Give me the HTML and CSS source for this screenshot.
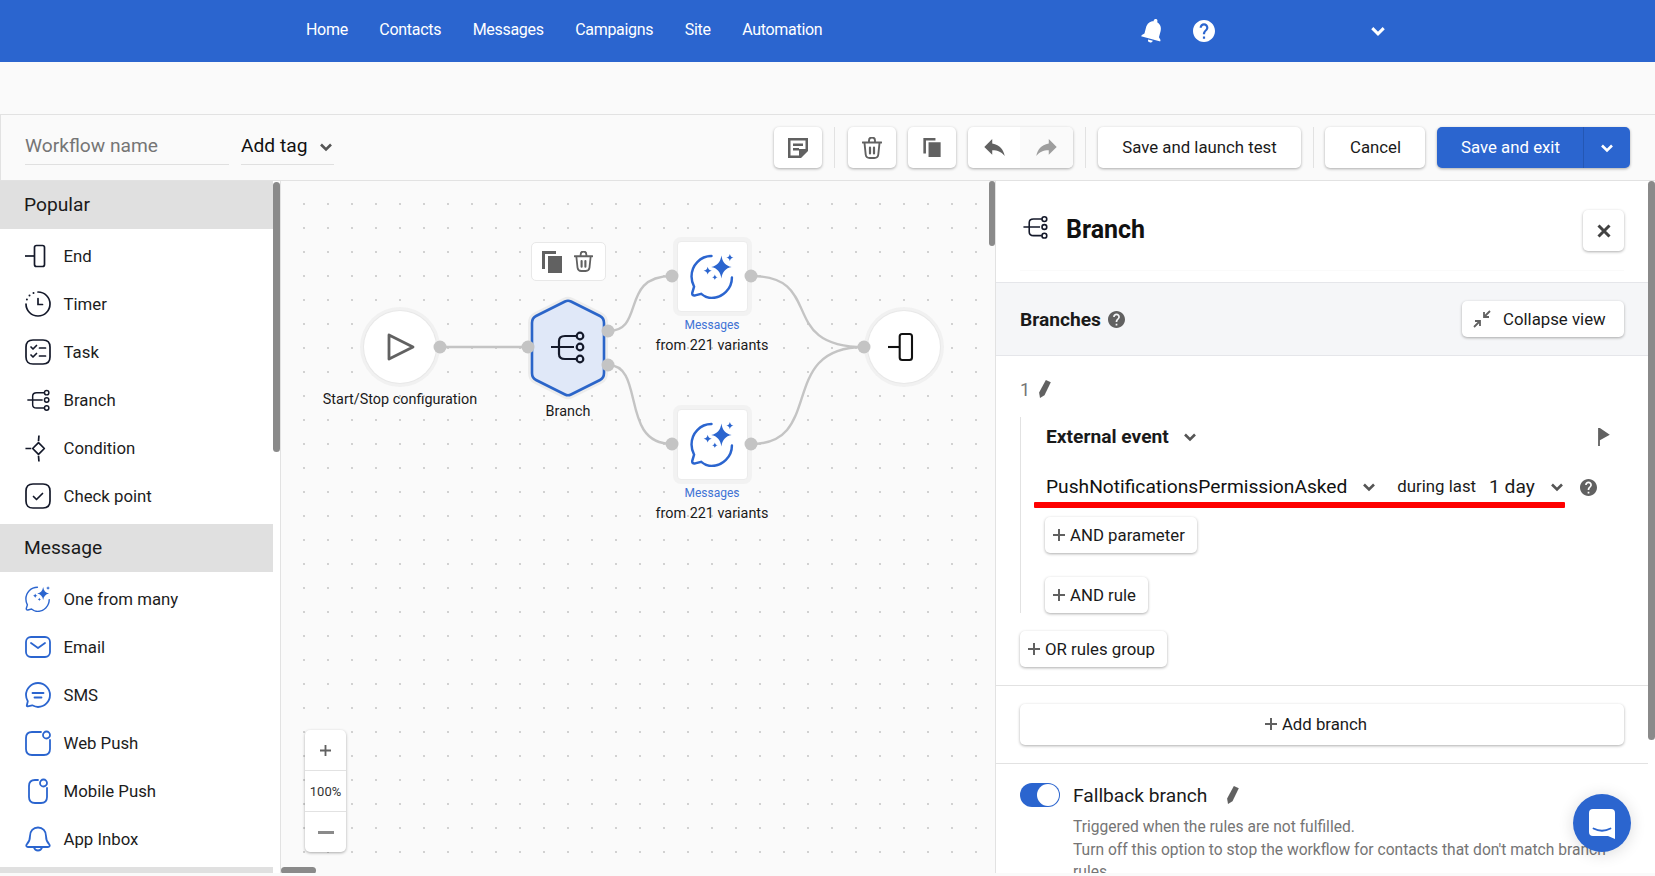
FILE: index.html
```html
<!DOCTYPE html>
<html lang="en">
<head>
<meta charset="utf-8">
<title>Workflow</title>
<link rel="stylesheet" href="styles.css">
</head>
<body>
<svg class="defs" xmlns="http://www.w3.org/2000/svg">
  <symbol id="i-chev" viewBox="0 0 14 10"><path d="M2 2.500l5 5 5-5" fill="none" stroke="currentColor" stroke-width="2.600"/></symbol>
  <symbol id="i-help" viewBox="2 2 20 20"><path fill="currentColor" d="M12 2C6.480 2 2 6.480 2 12s4.480 10 10 10 10-4.480 10-10S17.520 2 12 2zm1 17h-2v-2h2v2zm2.070-7.750l-.9.920C13.450 12.900 13 13.500 13 15h-2v-.5c0-1.100.45-2.100 1.170-2.830l1.240-1.260c.37-.36.59-.86.59-1.410 0-1.100-.9-2-2-2s-2 .9-2 2H8c0-2.210 1.790-4 4-4s4 1.790 4 4c0 .88-.36 1.680-.93 2.250z"/></symbol>
  <symbol id="i-note" viewBox="0 0 20 20"><path fill="currentColor" d="M0 0h20v13l-7 7H0zM2.500 2.500v15H11v-6.500h6.500v-8.500zM5 5.500h10V8H5zM5 10h6v2.500H5z"/></symbol>
  <symbol id="i-trash" viewBox="0 0 20 22"><g fill="none" stroke="currentColor" stroke-width="1.900" stroke-linecap="round"><path d="M0.500 5.500h19M7 5V3.500a3 3 0 0 1 6 0V5M2.500 6l1.200 11.500a4 4 0 0 0 4 3.500h4.600a4 4 0 0 0 4-3.500L17.500 6"/><path d="M8 10.500v6M12 10.500v6" stroke-width="2.200"/></g></symbol>
  <symbol id="i-copy" viewBox="0 0 20 22"><path fill="currentColor" d="M0 0h14v3H3v15H0zM6 5h14v17H6z"/></symbol>
  <symbol id="i-undo" viewBox="3 5 18 15"><path fill="currentColor" d="M10 9V5l-7 7 7 7v-4.100c5 0 8.500 1.600 11 5.100-1-5-4-10-11-11z"/></symbol>
  <symbol id="i-redo" viewBox="3 5 18 15"><path fill="currentColor" d="M14 9V5l7 7-7 7v-4.100c-5 0-8.500 1.600-11 5.100 1-5 4-10 11-11z"/></symbol>
  <symbol id="i-end" viewBox="1.500 0 26 26"><path d="M0.500 13H11" fill="none" stroke="currentColor" stroke-width="1.700"/><rect x="11" y="2.500" width="10" height="21" rx="2" fill="none" stroke="currentColor" stroke-width="1.700"/></symbol>
  <symbol id="i-timer" viewBox="0 0 26 26"><g fill="none" stroke="currentColor" stroke-width="1.700" stroke-linecap="round"><path d="M13 1a12 12 0 1 1-12 12M13 7.500v6h4.500"/><path d="M8.500 1.900v.01M4.500 4.500v.01M1.900 8.500v.01" stroke-width="2"/></g></symbol>
  <symbol id="i-task" viewBox="0 0 26 26"><g fill="none" stroke="currentColor" stroke-width="1.700" stroke-linecap="round" stroke-linejoin="round"><path d="M8 1h10q7 0 7 7v10q0 7-7 7H8q-7 0-7-7V8q0-7 7-7z"/><path d="M6 8l2 2 3.500-3.500M6 16l2 2 3.500-3.500M14.500 9h6M14.500 17h6"/></g></symbol>
  <symbol id="i-branch" viewBox="0 0 36 36"><g fill="none" stroke="currentColor" stroke-width="2.200"><path d="M2 18h23M27.500 7H16q-6 0-6 5v13q0 5 6 5h11.500"/><circle cx="31" cy="7" r="3.300"/><circle cx="31" cy="18" r="3.300"/><circle cx="31" cy="30" r="3.300"/></g></symbol>
  <symbol id="i-cond" viewBox="0 0 30 30"><g fill="none" stroke="currentColor" stroke-width="1.900" stroke-linejoin="round"><path d="M15 8.500l6.500 6.500-6.500 6.500L8.500 15z"/><path d="M0.500 15H7M15.500 0.500L15 7M15 23l.5 6.500"/></g></symbol>
  <symbol id="i-check" viewBox="0 0 26 26"><g fill="none" stroke="currentColor" stroke-width="1.700" stroke-linecap="round" stroke-linejoin="round"><path d="M8 1h10q7 0 7 7v10q0 7-7 7H8q-7 0-7-7V8q0-7 7-7z"/><path d="M8.500 13.500l3 3 6-6"/></g></symbol>
  <symbol id="i-many" viewBox="0 0 44 44"><path d="M21 2C10 2 1.500 11 1.500 22c0 4 1 7 2.500 10l-1.800 6q-.4 3 2.800 2.500L11 39c3 2.500 6 4 10 4 11 0 20-9 20-20" fill="none" stroke="currentColor" stroke-width="2.400" stroke-linecap="round"/><path fill="currentColor" d="M30.700 1.500c1 6.500 4 10 10 11.200-6 1.200-9 4.700-10 11.200-1-6.500-4-10-10-11.200 6-1.200 9-4.700 10-11.200zM39 0c.4 2 1.400 3.100 3.500 3.500-2.100.4-3.100 1.500-3.500 3.500-.4-2-1.400-3.100-3.500-3.500C37.600 3.100 38.600 2 39 0zM17.300 12.500c.4 2.200 1.600 3.400 4 3.800-2.400.4-3.600 1.600-4 3.800-.4-2.200-1.600-3.400-4-3.800 2.400-.4 3.600-1.600 4-3.800zM24.300 20c.3 1.600 1.200 2.400 2.800 2.700-1.600.3-2.500 1.100-2.800 2.700-.3-1.600-1.200-2.400-2.800-2.700 1.600-.3 2.500-1.100 2.800-2.700z"/></symbol>
  <symbol id="i-mail" viewBox="0 0 26 22"><g fill="none" stroke="currentColor" stroke-width="1.800" stroke-linecap="round" stroke-linejoin="round"><rect x="1" y="1" width="24" height="20" rx="5"/><path d="M6 7l7 5 7-5"/></g></symbol>
  <symbol id="i-sms" viewBox="0 0 26 26"><g fill="none" stroke="currentColor" stroke-width="1.800" stroke-linecap="round" stroke-linejoin="round"><path d="M13 1C6.400 1 1 6.400 1 13c0 2.400.7 4.400 1.800 6.200l-1 4.300q-.2 1 .9.800l4.500-1C9.200 24.300 11 25 13 25c6.600 0 12-5.400 12-12S19.600 1 13 1z"/><path d="M7.500 11h11M9.500 15.500h7"/></g></symbol>
  <symbol id="i-web" viewBox="0 0 26 26"><g fill="none" stroke="currentColor" stroke-width="1.800" stroke-linecap="round"><path d="M16 2H7Q1 2 1 8v11q0 6 6 6h12q6 0 6-6v-9"/><circle cx="21.500" cy="5" r="3.500"/></g></symbol>
  <symbol id="i-mobile" viewBox="0 0 22 26"><g fill="none" stroke="currentColor" stroke-width="1.800" stroke-linecap="round"><path d="M11 2H8Q2 2 2 8v11q0 6 6 6h6q6 0 6-6v-9"/><circle cx="16.500" cy="5" r="3.500"/></g></symbol>
  <symbol id="i-bell" viewBox="0 0 26 26"><g fill="none" stroke="currentColor" stroke-width="1.800" stroke-linejoin="round" stroke-linecap="round"><path d="M13 1.500c-4.800 0-8 3.700-8 8.500 0 4-1 6-3 8-1.400 1.500-.5 3 1 3h20c1.500 0 2.400-1.500 1-3-2-2-3-4-3-8 0-4.800-3.200-8.500-8-8.500z"/><path d="M9 21.500c.6 2 2 3 4 3s3.400-1 4-3"/></g></symbol>
  <symbol id="i-collapse" viewBox="0 0 18 18"><g fill="none" stroke="currentColor" stroke-width="1.800"><path d="M17 1l-6 6M11 2v5h5M1 17l6-6M2 11h5v5"/></g></symbol>
  <symbol id="i-pencil" viewBox="0 0 14 20"><path fill="currentColor" d="M8.500 0L14 2.500 7 17l-5 3-1-6z"/></symbol>
  <symbol id="i-flag" viewBox="0 0 14 20"><path fill="currentColor" d="M1 0h2l11 7.500L3 13.500V20H1z"/></symbol>
  <symbol id="i-plus" viewBox="0 0 12 12"><path d="M6 0v12M0 6h12" fill="none" stroke="currentColor" stroke-width="2"/></symbol>
  <symbol id="i-close" viewBox="0 0 14 14"><path d="M1.500 1.500l11 11M12.500 1.500l-11 11" fill="none" stroke="currentColor" stroke-width="3"/></symbol>
</svg>

<header class="topbar">
  <nav class="nav">
    <a>Home</a><a>Contacts</a><a>Messages</a><a>Campaigns</a><a>Site</a><a>Automation</a>
  </nav>
  <div class="top-icons">
    <svg class="bell-solid" viewBox="4 2 16 20"><path fill="currentColor" d="M12 22c1.100 0 2-.9 2-2h-4c0 1.100.89 2 2 2zm6-6v-5c0-3.070-1.640-5.640-4.500-6.320V4c0-.83-.67-1.500-1.500-1.500s-1.500.67-1.500 1.500v.68C7.630 5.360 6 7.920 6 11v5l-2 2v1h16v-1l-2-2z"/></svg>
    <svg class="top-help"><use href="#i-help"/></svg>
    <svg class="top-chev"><use href="#i-chev"/></svg>
  </div>
</header>
<div class="subbar"></div>

<section class="toolbar">
  <div class="field name-field">Workflow name</div>
  <div class="field tag-field">Add tag <svg class="chev"><use href="#i-chev"/></svg></div>
  <div class="tools">
    <button class="btn icon-btn"><svg class="ti ti-note"><use href="#i-note"/></svg></button>
    <span class="sep sep-a"></span>
    <button class="btn icon-btn"><svg class="ti ti-trash"><use href="#i-trash"/></svg></button>
    <button class="btn icon-btn gap-l"><svg class="ti ti-copy"><use href="#i-copy"/></svg></button>
    <div class="btn hist gap-l">
      <span class="hist-a"><svg class="ti ti-hist"><use href="#i-undo"/></svg></span>
      <span class="hist-b"><svg class="ti ti-hist"><use href="#i-redo"/></svg></span>
    </div>
    <span class="sep"></span>
    <button class="btn text-btn launch">Save and launch test</button>
    <span class="sep sep-c"></span>
    <button class="btn text-btn cancel">Cancel</button>
    <div class="primary">
      <span class="primary-main">Save and exit</span>
      <span class="primary-side"><svg class="chev chev-w"><use href="#i-chev"/></svg></span>
    </div>
  </div>
</section>

<main class="main">
  <aside class="sidebar">
    <div class="cat">Popular</div>
    <ul class="items">
      <li><span class="ib"><svg class="si"><use href="#i-end"/></svg></span>End</li>
      <li><span class="ib"><svg class="si"><use href="#i-timer"/></svg></span>Timer</li>
      <li><span class="ib"><svg class="si"><use href="#i-task"/></svg></span>Task</li>
      <li><span class="ib"><svg class="si si-b"><use href="#i-branch"/></svg></span>Branch</li>
      <li><span class="ib"><svg class="si si-c"><use href="#i-cond"/></svg></span>Condition</li>
      <li><span class="ib"><svg class="si"><use href="#i-check"/></svg></span>Check point</li>
    </ul>
    <div class="cat">Message</div>
    <ul class="items blue">
      <li><span class="ib"><svg class="si"><use href="#i-many"/></svg></span>One from many</li>
      <li><span class="ib"><svg class="si"><use href="#i-mail"/></svg></span>Email</li>
      <li><span class="ib"><svg class="si"><use href="#i-sms"/></svg></span>SMS</li>
      <li><span class="ib"><svg class="si"><use href="#i-web"/></svg></span>Web Push</li>
      <li><span class="ib"><svg class="si"><use href="#i-mobile"/></svg></span>Mobile Push</li>
      <li><span class="ib"><svg class="si"><use href="#i-bell"/></svg></span>App Inbox</li>
    </ul>
    <div class="cat"></div>
    <span class="thumb thumb-side"></span>
  </aside>

  <section class="canvas">
    <svg class="edges" viewBox="0 0 714 692">
      <g fill="none" stroke="#c4c4c4" stroke-width="2.400">
        <path d="M159 166H247"/>
        <path d="M327 150C365 150 338 95 391 95"/>
        <path d="M327 184C365 184 338 263 391 263"/>
        <path d="M470 95C545 95 495 166 583 166"/>
        <path d="M470 263C545 263 495 166 583 166"/>
      </g>
    </svg>

    <div class="round-node start-node"><svg class="play" viewBox="0 0 28 28"><path d="M2 2l24 12L2 26z" fill="none" stroke="#616161" stroke-width="2.800" stroke-linejoin="round"/></svg></div>
    <div class="round-node end-node"><svg class="end-big"><use href="#i-end"/></svg></div>
    <div class="lbl lbl-start">Start/Stop configuration</div>

    <div class="actions">
      <svg class="act-copy"><use href="#i-copy"/></svg>
      <svg class="act-trash"><use href="#i-trash"/></svg>
    </div>

    <svg class="hex" viewBox="0 0 80 104">
      <path d="M37 5.500Q40 4 43 5.500L72 20Q76 22 76 27V77Q76 82 72 84L43 98.500Q40 100 37 98.500L8 84Q4 82 4 77V27Q4 22 8 20Z" fill="#e0e8f8" stroke="#ececec" stroke-width="8"/>
      <path d="M37 5.500Q40 4 43 5.500L72 20Q76 22 76 27V77Q76 82 72 84L43 98.500Q40 100 37 98.500L8 84Q4 82 4 77V27Q4 22 8 20Z" fill="#e0e8f8" stroke="#2b65c9" stroke-width="2.600"/>
      <use href="#i-branch" x="21" y="33" width="36" height="36" class="hex-ico"/>
    </svg>
    <div class="lbl lbl-branch">Branch</div>

    <div class="card card-a"><svg class="card-ico"><use href="#i-many"/></svg></div>
    <div class="lbl lbl-blue lbl-m1">Messages</div>
    <div class="lbl lbl-v1">from 221 variants</div>
    <div class="card card-b"><svg class="card-ico"><use href="#i-many"/></svg></div>
    <div class="lbl lbl-blue lbl-m2">Messages</div>
    <div class="lbl lbl-v2">from 221 variants</div>

    <svg class="edges" viewBox="0 0 714 692">
      <g fill="#c4c4c4">
        <circle cx="159" cy="166" r="6.500"/>
        <circle cx="247" cy="166" r="6.500"/>
        <circle cx="327" cy="150" r="6.500"/>
        <circle cx="327" cy="184" r="6.500"/>
        <circle cx="391" cy="95" r="6.500"/>
        <circle cx="470" cy="95" r="6.500"/>
        <circle cx="391" cy="263" r="6.500"/>
        <circle cx="470" cy="263" r="6.500"/>
        <circle cx="583" cy="166" r="6.500"/>
      </g>
    </svg>

    <div class="zoomer">
      <div class="z-row"><svg class="z-plus"><use href="#i-plus"/></svg></div>
      <div class="z-row z-pct">100%</div>
      <div class="z-row"><span class="z-minus"></span></div>
    </div>
    <span class="thumb thumb-cv"></span>
    <span class="thumb thumb-ch"></span>
  </section>

  <aside class="panel">
    <div class="title-wrap">
      <div class="title-row">
        <svg class="title-ico"><use href="#i-branch"/></svg>
        <h1 class="title">Branch</h1>
        <button class="btn close"><svg class="close-ico"><use href="#i-close"/></svg></button>
      </div>
    </div>
    <div class="branches-row">
      <strong class="branches-t">Branches</strong>
      <svg class="q"><use href="#i-help"/></svg>
      <button class="btn collapse"><svg class="collapse-ico"><use href="#i-collapse"/></svg>Collapse view</button>
    </div>
    <div class="rules">
      <div class="num-row"><span class="num">1</span><svg class="pencil"><use href="#i-pencil"/></svg></div>
      <div class="group">
        <div class="ext-row"><strong class="ext">External event</strong><svg class="chev ext-chev"><use href="#i-chev"/></svg><svg class="flag"><use href="#i-flag"/></svg></div>
        <div class="push-row">
          <span class="push-name">PushNotificationsPermissionAsked</span>
          <svg class="chev push-chev"><use href="#i-chev"/></svg>
          <span class="during">during last</span>
          <span class="day">1 day</span>
          <svg class="chev day-chev"><use href="#i-chev"/></svg>
          <svg class="q q-push"><use href="#i-help"/></svg>
          <span class="redline"></span>
        </div>
        <button class="btn add-btn and-param"><svg class="plus"><use href="#i-plus"/></svg>AND parameter</button>
        <button class="btn add-btn and-rule"><svg class="plus"><use href="#i-plus"/></svg>AND rule</button>
      </div>
      <button class="btn add-btn or-btn"><svg class="plus"><use href="#i-plus"/></svg>OR rules group</button>
    </div>
    <div class="add-branch-wrap">
      <button class="btn add-branch"><svg class="plus"><use href="#i-plus"/></svg>Add branch</button>
    </div>
    <div class="fallback">
      <div class="fb-row">
        <span class="toggle"><span class="knob"></span></span>
        <span class="fb-t">Fallback branch</span>
        <svg class="pencil fb-pencil"><use href="#i-pencil"/></svg>
      </div>
      <p class="fb-desc">Triggered when the rules are not fulfilled.<br>Turn off this option to stop the workflow for contacts that don't match branch rules.</p>
    </div>
    <span class="thumb thumb-panel"></span>
  </aside>
</main>

<div class="chat">
  <svg class="chat-ico" viewBox="0 0 26 30"><path fill="#fff" d="M4 0h18q4 0 4 4v26l-7-3H4q-4 0-4-4V4q0-4 4-4z"/><path d="M4.500 19.500q8.500 4.500 17 0" fill="none" stroke="#2b65cf" stroke-width="1.800" stroke-linecap="round"/></svg>
</div>
</body>
</html>
```

FILE: styles.css
```css
* { box-sizing: border-box; }
html, body { margin: 0; height: 876px; overflow: hidden; }
body { width: 1655px; background: #fafafa; font-family: Roboto, "Liberation Sans", sans-serif; color: #1a1a1a; font-size: 16px; position: relative; }
.defs { display: none; }
svg { display: block; flex: none; }
ul { list-style: none; margin: 0; padding: 0; }
button { font: inherit; color: inherit; background: #fff; border: 0; padding: 0; margin: 0; }

/* top */
.topbar { height: 62px; background: #2b65cf; color: #fff; display: flex; align-items: center; padding-left: 306px; }
.nav { display: flex; gap: 31.500px; width: 836px; font-size: 16px; letter-spacing: -0.3px; padding-bottom: 3px; }
.top-icons { display: flex; align-items: center; }
.bell-solid { width: 20px; height: 25px; transform: rotate(15deg); margin: -2px 30px 0 1px; }
.top-help { width: 22px; height: 22px; }
.top-chev { width: 16px; height: 12px; margin-left: 155px; }
.subbar { height: 52px; }

/* toolbar */
.toolbar { height: 67px; border: 1px solid #e2e2e2; border-right: 0; display: flex; align-items: center; padding-left: 24px; background: #fafafa; }
.field { font-size: 19.200px; height: 35px; border-bottom: 1px solid #e0e0e0; display: flex; align-items: center; padding-bottom: 3px; }
.name-field { width: 204px; color: #757575; margin-right: 12px; }
.tag-field { width: 93px; color: #111; }
.chev { width: 14px; height: 10px; color: #555; }
.tag-field .chev { margin-left: 12px; margin-top: 2px; }
.tools { display: flex; align-items: center; margin-left: 440px; }
.btn { background: #fff; border-radius: 5px; box-shadow: 0 1px 3px rgba(0,0,0,.32); display: flex; align-items: center; justify-content: center; }
.icon-btn { width: 48px; height: 41px; }
.gap-l { margin-left: 12px; }
.sep { width: 1px; height: 41px; background: #e2e2e2; margin: 0 12px; }
.sep-a { margin-right: 13px; }
.sep-c { margin-right: 11px; }
.ti { color: #616161; }
.ti-note { width: 20px; height: 20px; }
.ti-trash { width: 20px; height: 22px; }
.ti-copy { width: 18px; height: 19px; }
.ti-hist { width: 21px; height: 17px; }
.hist { width: 105px; height: 41px; justify-content: flex-start; overflow: hidden; }
.hist-a, .hist-b { height: 41px; display: flex; align-items: center; justify-content: center; }
.hist-a { width: 52px; box-shadow: 1px 0 2px rgba(0,0,0,.15); }
.hist-b { width: 53px; background: #fafafa; }
.hist-b .ti { color: #9e9e9e; }
.text-btn { height: 41px; font-size: 16.800px; color: #1a1a1a; padding-bottom: 1px; }
.launch { width: 203px; }
.cancel { width: 100px; padding-left: 1px; }
.primary { width: 193px; height: 41px; margin-left: 12px; background: #2b65cf; color: #fff; border-radius: 5px; box-shadow: 0 1px 3px rgba(0,0,0,.32); display: flex; font-size: 16.800px; }
.primary-main { width: 146px; display: flex; align-items: center; justify-content: center; padding: 0 0 2px 1px; }
.primary-side { width: 47px; border-left: 1px solid #2457b4; display: flex; align-items: center; justify-content: center; }
.chev-w { color: #fff; }

/* main */
.main { display: flex; height: 692px; background: #fff; }
.thumb { position: absolute; background: #8a8a8a; border-radius: 4px; }

/* sidebar */
.sidebar { width: 281px; flex: none; background: #fff; border-right: 1px solid #e2e2e2; padding-right: 7px; position: relative; overflow: hidden; }
.cat { height: 48px; background: #e0e0e0; font-size: 19.200px; color: #1a1a1a; padding: 0 0 1px 24px; display: flex; align-items: center; }
.items { padding: 3px 0 4px; }
.items li { height: 48px; display: flex; align-items: center; font-size: 16.800px; color: #1c1c1c; padding-left: 25px; }
.ib { width: 26px; height: 26px; margin-right: 12.500px; display: flex; align-items: center; justify-content: center; color: #14192a; }
.si { width: 26px; height: 26px; }
.si-b { width: 24px; height: 24px; }
.si-c { width: 27px; height: 27px; }
.blue .ib { color: #2b65cf; }
.thumb-side { left: 273px; top: 1px; width: 7px; height: 270px; }

/* canvas */
.canvas { width: 714px; flex: none; position: relative; overflow: hidden; background-color: #fafafa; background-image: radial-gradient(circle at center, #b4b4b4 0.5px, transparent 1px); background-size: 24px 24px; background-position: 11px 11px; }
.edges { position: absolute; left: 0; top: 0; width: 714px; height: 692px; }
.round-node { position: absolute; width: 72px; height: 72px; border-radius: 50%; background: #fff; box-shadow: 0 0 0 1px #e8e8e8, 0 0 0 4px #f1f1f1; display: flex; align-items: center; justify-content: center; }
.start-node { left: 83px; top: 130px; }
.end-node { left: 587px; top: 130px; }
.play { width: 28px; height: 28px; margin-left: 2px; }
.end-big { width: 32px; height: 32px; color: #111; }
.lbl { position: absolute; width: 200px; text-align: center; font-size: 14.400px; color: #1a1a1a; line-height: 18px; }
.lbl-start { left: 19px; top: 210px; }
.lbl-branch { left: 187px; top: 222px; }
.lbl-blue { font-size: 12px; color: #3f73d6; }
.lbl-m1 { left: 331px; top: 135px; }
.lbl-v1 { left: 331px; top: 156px; }
.lbl-m2 { left: 331px; top: 303px; }
.lbl-v2 { left: 331px; top: 324px; }
.actions { position: absolute; left: 250px; top: 61px; width: 75px; height: 39px; background: #fff; border: 1px solid #e8e8e8; border-radius: 5px; display: flex; align-items: center; padding-left: 10px; color: #616161; }
.act-copy { width: 20px; height: 22px; margin-right: 12px; }
.act-trash { width: 19px; height: 21px; }
.hex { position: absolute; left: 247px; top: 115px; width: 80px; height: 104px; overflow: visible; }
.hex-ico { color: #14192a; }
.card { position: absolute; left: 396px; width: 71px; height: 71px; background: #fff; border: 1px solid #ececec; border-radius: 4px; box-shadow: 0 0 0 4px #f2f2f2; display: flex; align-items: center; justify-content: center; }
.card-a { top: 60px; }
.card-b { top: 228px; }
.card-ico { width: 45px; height: 45px; color: #2b65cf; }
.zoomer { position: absolute; left: 24px; top: 549px; width: 41px; height: 122px; background: #fff; border-radius: 5px; box-shadow: 0 1px 3px rgba(0,0,0,.32); display: flex; flex-direction: column; }
.z-row { flex: 1; display: flex; align-items: center; justify-content: center; border-bottom: 1px solid #e2e2e2; color: #616161; }
.z-row:last-child { border-bottom: 0; }
.z-pct { font-size: 13px; color: #333; }
.z-plus { width: 11px; height: 11px; }
.z-minus { width: 16px; height: 3px; background: #8a8a8a; }
.thumb-cv { right: 0; top: 0; width: 6px; height: 65px; }
.thumb-ch { left: 0; top: 686px; width: 35px; height: 7px; }

/* panel */
.panel { flex: 1; border-left: 1px solid #e2e2e2; padding-right: 7px; position: relative; overflow: hidden; background: #fff; }
.thumb-panel { right: 0; top: 0; width: 7px; height: 559px; }
.title-wrap { height: 101px; padding: 0 24px; }
.title-row { height: 90px; display: flex; align-items: center; border-bottom: 1px solid #fafafa; }
.title-ico { width: 26px; height: 26px; margin: 2px 0 0 2px; color: #14192a; }
.title { font-size: 25px; font-weight: 700; color: #111; margin: 8px 0 0 18px; }
.close { width: 41px; height: 41px; margin-left: auto; margin-top: 10px; }
.close-ico { width: 14px; height: 14px; color: #424242; }
.branches-row { height: 74px; background: #f5f6f8; border-top: 1px solid #e5e6ea; border-bottom: 1px solid #e5e6ea; display: flex; align-items: center; padding: 0 24px; }
.branches-t { font-size: 19.200px; font-weight: 700; color: #1a1a1a; }
.q { width: 17px; height: 17px; color: #616161; margin-left: 7px; }
.collapse { margin-left: auto; width: 162px; height: 36px; font-size: 16.800px; justify-content: flex-start; padding-left: 11px; color: #1a1a1a; }
.collapse-ico { width: 18px; height: 18px; color: #616161; margin-right: 12px; }
.rules { padding: 20px 24px 18px; border-bottom: 1px solid #e2e2e2; }
.num-row { height: 26px; display: flex; align-items: center; margin-bottom: 15px; color: #757575; font-size: 18px; }
.pencil { width: 13px; height: 18px; color: #616161; margin-left: 8px; }
.group { border-left: 1px solid #e2e2e2; padding-left: 25px; }
.ext-row { height: 40px; display: flex; align-items: center; }
.ext { font-size: 19.200px; font-weight: 700; margin-top: -2px; }
.ext-chev { margin-left: 14px; }
.flag { width: 13px; height: 18px; color: #616161; margin-left: auto; margin-right: 14px; }
.push-row { height: 40px; margin-top: 10px; display: flex; align-items: center; position: relative; font-size: 19.200px; }
.push-name { color: #111; margin-top: -2px; }
.push-chev { margin-left: 15px; }
.during { font-size: 16.800px; margin: -2px 0 0 21px; }
.day { margin: -2px 0 0 13px; }
.day-chev { margin-left: 15px; }
.q-push { margin-left: 16px; }
.redline { position: absolute; left: -12px; top: 35px; width: 531px; height: 6px; background: #fe0000; border-radius: 1px; }
.add-btn { height: 36px; font-size: 16.800px; justify-content: flex-start; padding-left: 8px; color: #1a1a1a; }
.plus { width: 12px; height: 12px; color: #616161; margin-right: 5px; }
.and-param { width: 152px; margin: 10px 0 0 -1px; }
.and-rule { width: 103px; margin: 24px 0 0 -1px; }
.or-btn { width: 147px; margin-top: 18px; }
.add-branch-wrap { padding: 18px 24px; border-bottom: 1px solid #e2e2e2; }
.add-branch { width: 100%; height: 41px; font-size: 16.800px; color: #1a1a1a; padding: 0 12px 2px 0; }
.fallback { padding: 19px 24px 0; }
.fb-row { display: flex; align-items: center; height: 24px; }
.toggle { width: 40px; height: 24px; background: #2b65cf; border-radius: 12px; position: relative; margin-right: 13px; }
.knob { position: absolute; right: 1px; top: 1px; width: 22px; height: 22px; border-radius: 50%; background: #fff; }
.fb-t { font-size: 19.200px; color: #1a1a1a; }
.fb-pencil { margin-left: 19px; }
.fb-desc { margin: 9px 0 0 53px; font-size: 15.600px; line-height: 22.500px; color: #757575; }

/* chat */
.chat { position: absolute; left: 1573px; top: 794px; width: 58px; height: 58px; border-radius: 50%; background: #2b65cf; box-shadow: 0 2px 16px rgba(0,0,0,.14); display: flex; align-items: center; justify-content: center; }
.chat-ico { width: 26px; height: 30px; margin-top: 1px; }
```
